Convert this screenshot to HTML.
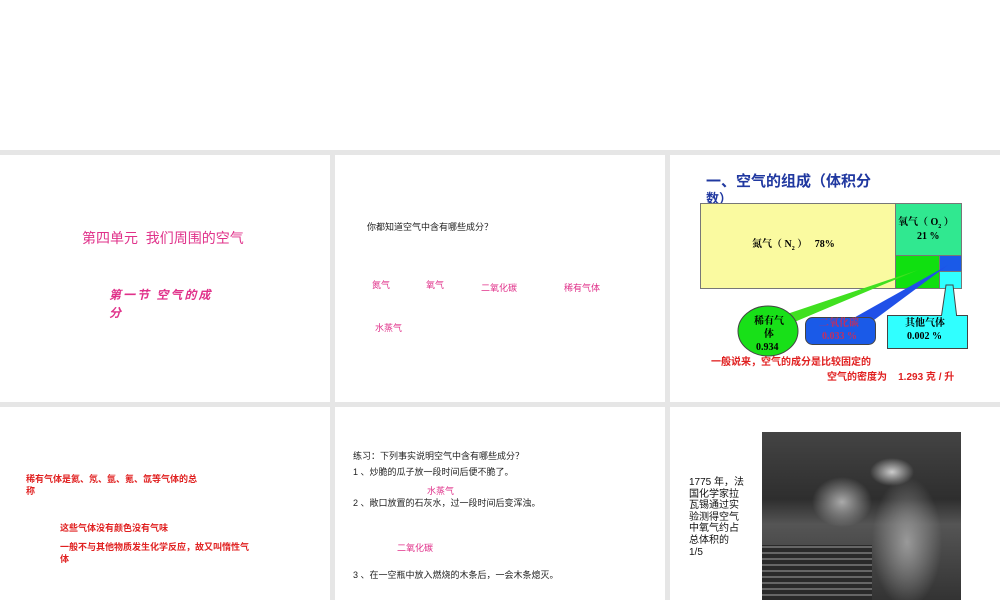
<!DOCTYPE html>
<html><head><meta charset="utf-8"><style>
*{margin:0;padding:0;box-sizing:border-box}
body{width:1000px;height:600px;background:#e6e6e6;position:relative;overflow:hidden;font-family:"Liberation Sans","Noto Sans CJK SC",sans-serif}
.p{position:absolute;background:#fff}
.t{position:absolute;white-space:nowrap;line-height:1.2}
.pk{color:#e0318a}
.rd{color:#e02020;font-weight:bold}
.s{font-family:"Liberation Serif","Noto Serif CJK SC",serif;font-weight:bold}
</style></head><body>
<div class="p" style="left:0;top:0;width:1000px;height:150px"></div>
<div class="p" style="left:0;top:155px;width:330px;height:247px"></div>
<div class="p" style="left:335px;top:155px;width:330px;height:247px"></div>
<div class="p" style="left:670px;top:155px;width:330px;height:247px"></div>
<div class="p" style="left:0;top:407px;width:330px;height:193px"></div>
<div class="p" style="left:335px;top:407px;width:330px;height:193px"></div>
<div class="p" style="left:670px;top:407px;width:330px;height:193px"></div>

<!-- panel 1 -->
<div class="t pk" style="left:82px;top:230px;font-size:14px">第四单元&nbsp; 我们周围的空气</div>
<div class="t pk" style="left:109px;top:288px;font-size:12px;font-weight:bold;font-style:italic;letter-spacing:2px">第一节 空气的成</div>
<div class="t pk" style="left:109px;top:306px;font-size:12px;font-weight:bold;font-style:italic">分</div>

<!-- panel 2 -->
<div class="t" style="left:367px;top:222px;font-size:9px;color:#222">你都知道空气中含有哪些成分？</div>
<div class="t pk" style="left:372px;top:280px;font-size:9px">氮气</div>
<div class="t pk" style="left:426px;top:280px;font-size:9px">氧气</div>
<div class="t pk" style="left:481px;top:283px;font-size:9px">二氧化碳</div>
<div class="t pk" style="left:564px;top:283px;font-size:9px">稀有气体</div>
<div class="t pk" style="left:375px;top:323px;font-size:9px">水蒸气</div>

<!-- panel 3 -->
<div class="t" style="left:706px;top:173px;font-size:15px;font-weight:bold;color:#2038a0">一、空气的组成（体积分</div>
<div class="t" style="left:706px;top:191px;font-size:13px;font-weight:bold;color:#2038a0;height:12px;overflow:hidden">数）</div>
<svg style="position:absolute;left:670px;top:155px" width="330" height="247">
<rect x="30.5" y="48.5" width="195" height="85" fill="#fafaa0" stroke="#777"/>
<rect x="225.5" y="48.5" width="66" height="52" fill="#30e890" stroke="#777"/>
<rect x="225.5" y="100.5" width="44" height="33" fill="#10e010" stroke="#777"/>
<rect x="269.5" y="100.5" width="22" height="16" fill="#1a5ae8" stroke="#777"/>
<rect x="269.5" y="116.5" width="22" height="17" fill="#30ffff" stroke="#777"/>
<polygon points="108,162 248,115 122,168" fill="#40e020"/>
<ellipse cx="98" cy="176" rx="30" ry="25" fill="#18e018" stroke="#444"/>
<polygon points="180,165 278,110 200,168" fill="#2050e8"/>
<rect x="135.5" y="162.5" width="70" height="27" rx="7" fill="#1a5ae8" stroke="#444"/>
<polygon points="276,130 283,130 287,164 271,164" fill="#30ffff" stroke="#444"/>
<rect x="217.5" y="160.5" width="80" height="33" fill="#30ffff" stroke="#444"/>
<rect x="272" y="160" width="14" height="3" fill="#30ffff"/>
</svg>
<div class="t s" style="left:752px;top:239px;font-size:10px">氮气（ N<sub style="font-size:6px">2</sub> ）&nbsp;&nbsp; 78%</div>
<div class="t s" style="left:898px;top:217px;font-size:10px">氧气（ O<sub style="font-size:6px">2</sub> ）</div>
<div class="t s" style="left:917px;top:231px;font-size:10px">21 %</div>
<div class="t s" style="left:754px;top:316px;font-size:10px">稀有气</div>
<div class="t s" style="left:764px;top:329px;font-size:10px">体</div>
<div class="t s" style="left:756px;top:342px;font-size:10px">0.934</div>
<div class="t s" style="left:819px;top:318px;font-size:10px;color:#c03060">二氧化碳</div>
<div class="t s" style="left:822px;top:331px;font-size:10px;color:#c03060">0.033 %</div>
<div class="t s" style="left:905px;top:318px;font-size:10px">其他气体</div>
<div class="t s" style="left:907px;top:331px;font-size:10px">0.002 %</div>
<div class="t" style="left:711px;top:357px;font-size:10px;font-weight:bold;color:#e02020">一般说来，空气的成分是比较固定的</div>
<div class="t" style="left:827px;top:372px;font-size:10px;font-weight:bold;color:#e02020">空气的密度为&nbsp;&nbsp;&nbsp; 1.293 克 / 升</div>

<!-- panel 4 -->
<div class="t rd" style="left:26px;top:474px;font-size:9px">稀有气体是氦、氖、氩、氪、氙等气体的总</div>
<div class="t rd" style="left:26px;top:486px;font-size:9px">称</div>
<div class="t rd" style="left:60px;top:523px;font-size:9px">这些气体没有颜色没有气味</div>
<div class="t rd" style="left:60px;top:542px;font-size:9px">一般不与其他物质发生化学反应，故又叫惰性气</div>
<div class="t rd" style="left:60px;top:554px;font-size:9px">体</div>

<!-- panel 5 -->
<div class="t" style="left:353px;top:451px;font-size:9px;color:#222">练习：下列事实说明空气中含有哪些成分？</div>
<div class="t" style="left:353px;top:467px;font-size:9px;color:#222">1 、炒脆的瓜子放一段时间后便不脆了。</div>
<div class="t pk" style="left:427px;top:486px;font-size:9px">水蒸气</div>
<div class="t" style="left:353px;top:498px;font-size:9px;color:#222">2 、敞口放置的石灰水，过一段时间后变浑浊。</div>
<div class="t pk" style="left:397px;top:543px;font-size:9px">二氧化碳</div>
<div class="t" style="left:353px;top:570px;font-size:9px;color:#222">3 、在一空瓶中放入燃烧的木条后，一会木条熄灭。</div>

<!-- panel 6 -->
<div class="t" style="left:689px;top:477px;font-size:10px;line-height:11.6px;color:#111">1775 年，法<br>国化学家拉<br>瓦锡通过实<br>验测得空气<br>中氧气约占<br>总体积的<br>1/5</div>
<div style="position:absolute;left:762px;top:432px;width:199px;height:168px;background:
radial-gradient(ellipse 22px 14px at 130px 40px,#ccc,transparent),
radial-gradient(ellipse 35px 65px at 145px 110px,#999,transparent),
radial-gradient(ellipse 30px 25px at 80px 70px,#aaa,transparent),
linear-gradient(180deg,#444 0%,#2e2e2e 40%,#555 55%,#333 100%)"></div>
<div style="position:absolute;left:762px;top:545px;width:110px;height:55px;background:repeating-linear-gradient(0deg,#2a2a2a 0 4px,#666 4px 6px)"></div>
</body></html>
